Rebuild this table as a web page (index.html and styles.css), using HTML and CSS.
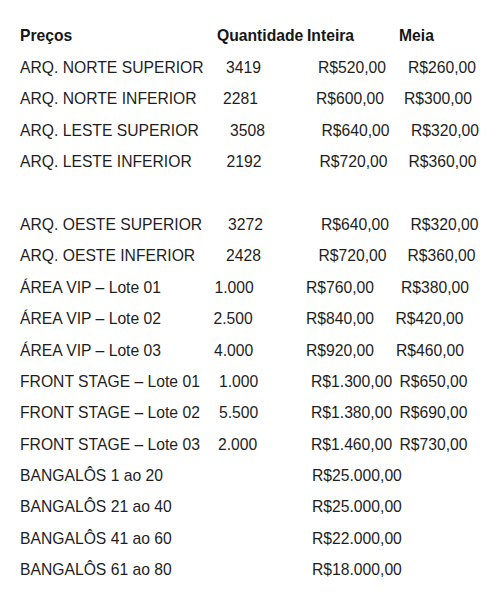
FILE: index.html
```html
<!DOCTYPE html>
<html lang="pt-BR">
<head>
<meta charset="utf-8">
<title>Preços</title>
<link rel="stylesheet" href="styles.css">
</head>
<body>
<div class="sheet">
  <div class="row head h">
    <span class="c name">Preços</span>
    <span class="c qty">Quantidade</span>
    <span class="c int">Inteira</span>
    <span class="c meia">Meia</span>
  </div>
  <div class="row ns">
    <span class="c name">ARQ. NORTE SUPERIOR</span>
    <span class="c qty">3419</span>
    <span class="c int">R$520,00</span>
    <span class="c meia">R$260,00</span>
  </div>
  <div class="row ni">
    <span class="c name">ARQ. NORTE INFERIOR</span>
    <span class="c qty">2281</span>
    <span class="c int">R$600,00</span>
    <span class="c meia">R$300,00</span>
  </div>
  <div class="row ls">
    <span class="c name">ARQ. LESTE SUPERIOR</span>
    <span class="c qty">3508</span>
    <span class="c int">R$640,00</span>
    <span class="c meia">R$320,00</span>
  </div>
  <div class="row li">
    <span class="c name">ARQ. LESTE INFERIOR</span>
    <span class="c qty">2192</span>
    <span class="c int">R$720,00</span>
    <span class="c meia">R$360,00</span>
  </div>
  <div class="row blank"></div>
  <div class="row os">
    <span class="c name">ARQ. OESTE SUPERIOR</span>
    <span class="c qty">3272</span>
    <span class="c int">R$640,00</span>
    <span class="c meia">R$320,00</span>
  </div>
  <div class="row oi">
    <span class="c name">ARQ. OESTE INFERIOR</span>
    <span class="c qty">2428</span>
    <span class="c int">R$720,00</span>
    <span class="c meia">R$360,00</span>
  </div>
  <div class="row v1">
    <span class="c name">ÁREA VIP – Lote 01</span>
    <span class="c qty">1.000</span>
    <span class="c int">R$760,00</span>
    <span class="c meia">R$380,00</span>
  </div>
  <div class="row v2">
    <span class="c name">ÁREA VIP – Lote 02</span>
    <span class="c qty">2.500</span>
    <span class="c int">R$840,00</span>
    <span class="c meia">R$420,00</span>
  </div>
  <div class="row v3">
    <span class="c name">ÁREA VIP – Lote 03</span>
    <span class="c qty">4.000</span>
    <span class="c int">R$920,00</span>
    <span class="c meia">R$460,00</span>
  </div>
  <div class="row f1">
    <span class="c name">FRONT STAGE – Lote 01</span>
    <span class="c qty">1.000</span>
    <span class="c int">R$1.300,00</span>
    <span class="c meia">R$650,00</span>
  </div>
  <div class="row f2">
    <span class="c name">FRONT STAGE – Lote 02</span>
    <span class="c qty">5.500</span>
    <span class="c int">R$1.380,00</span>
    <span class="c meia">R$690,00</span>
  </div>
  <div class="row f3">
    <span class="c name">FRONT STAGE – Lote 03</span>
    <span class="c qty">2.000</span>
    <span class="c int">R$1.460,00</span>
    <span class="c meia">R$730,00</span>
  </div>
  <div class="row b">
    <span class="c name">BANGALÔS 1 ao 20</span>
    <span class="c qty"></span>
    <span class="c int">R$25.000,00</span>
    <span class="c meia"></span>
  </div>
  <div class="row b">
    <span class="c name">BANGALÔS 21 ao 40</span>
    <span class="c qty"></span>
    <span class="c int">R$25.000,00</span>
    <span class="c meia"></span>
  </div>
  <div class="row b">
    <span class="c name">BANGALÔS 41 ao 60</span>
    <span class="c qty"></span>
    <span class="c int">R$22.000,00</span>
    <span class="c meia"></span>
  </div>
  <div class="row b">
    <span class="c name">BANGALÔS 61 ao 80</span>
    <span class="c qty"></span>
    <span class="c int">R$18.000,00</span>
    <span class="c meia"></span>
  </div>
</div>
</body>
</html>
```

FILE: styles.css
```css
html, body {
  margin: 0;
  padding: 0;
  background: #ffffff;
}

.sheet {
  padding: 20px 0 0 20px;
  font-family: "Liberation Sans", Arial, sans-serif;
  font-size: 15.7px;
  color: #1e1e1e;
}

.row {
  display: grid;
  grid-template-columns: 193px 92px 90px 1fr;
  height: 31.4px;
  line-height: 31.4px;
  --q: 0px;
  --i: 0px;
  --m: 0px;
}

.row.head {
  font-weight: bold;
  height: 32px;
  color: #161616;
}

.c {
  white-space: nowrap;
}

.qty { padding-left: var(--q); }
.int { padding-left: var(--i); }
.meia { padding-left: var(--m); }

.h  { --q: 4px;    --i: 2px;    --m: 4px; }
.ns { --q: 13px;   --i: 13px;   --m: 13px; }
.ni { --q: 10px;   --i: 11px;   --m: 9px; }
.ls { --q: 17px;   --i: 16.5px; --m: 16px; }
.li { --q: 13.5px; --i: 14.5px; --m: 13.5px; }
.os { --q: 15px;   --i: 16px;   --m: 15.5px; }
.oi { --q: 13px;   --i: 13.5px; --m: 12.5px; }
.v1 { --q: 1.5px;  --i: 1px;    --m: 6px; }
.v2 { --q: 0.5px;  --i: 1px;    --m: 0.5px; }
.v3 { --q: 1px;    --i: 1px;    --m: 1px; }
.f1 { --q: 6px;    --i: 6px;    --m: 4.5px; }
.f2 { --q: 6px;    --i: 6px;    --m: 4.5px; }
.f3 { --q: 5px;    --i: 6px;    --m: 4.5px; }
.b  { --i: 7px; }
```
